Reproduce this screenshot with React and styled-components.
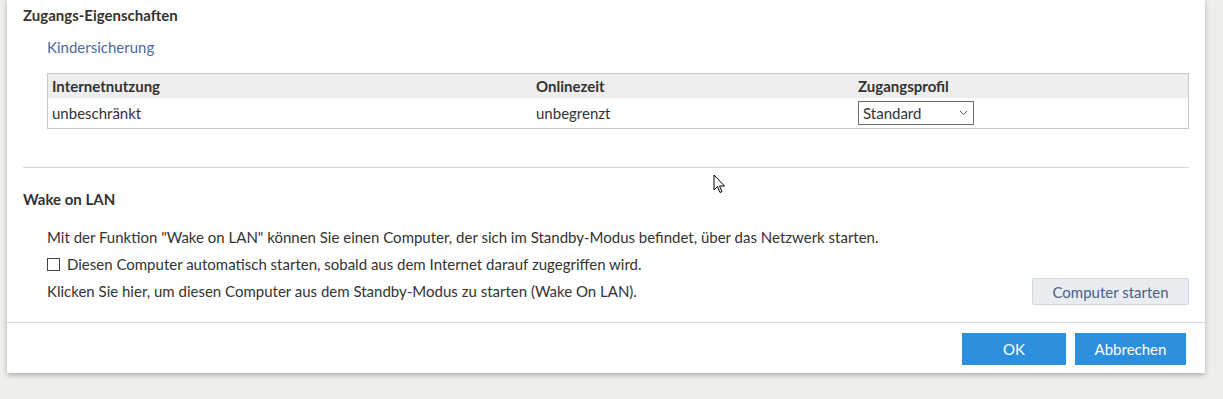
import React from "react";
import styled, { createGlobalStyle } from "styled-components";

const Global = createGlobalStyle`
  html, body { margin: 0; padding: 0; background: #f0eee9; }
  body { font-family: "Source Sans Pro", Lato, "Open Sans", sans-serif; color: #333; }
  * { box-sizing: border-box; }
`;

const Page = styled.div`
  position: relative;
  width: 1223px;
  height: 399px;
  background: #f0eee9;
  padding-left: 7px;
  overflow: hidden;
`;

const Panel = styled.div`
  width: 1198px;
  background: #fff;
  box-shadow: 0 2px 5px rgba(0, 0, 0, 0.28);
`;

const Body = styled.div`
  padding: 5px 16px 0 16px;
`;

const Heading = styled.h2`
  margin: 0;
  font-size: 15px;
  font-weight: 700;
  line-height: 20px;
  color: #333;
`;

const Indented = styled.div`
  padding-left: 24px;
`;

const LinkTitle = styled.div`
  color: #4b6b9b;
  font-size: 15px;
  line-height: 20px;
  margin-top: 12px;
`;

const Table = styled.div`
  margin-top: 16px;
  border: 1px solid #c9c9c9;
  width: 1142px;
`;

const Row = styled.div`
  display: grid;
  grid-template-columns: 484px 322px 1fr;
  align-items: center;
  height: ${(p) => (p.$head ? "24px" : "30px")};
  background: ${(p) => (p.$head ? "#eeeeee" : "#fff")};
  font-weight: ${(p) => (p.$head ? 700 : 400)};
  font-size: 15px;
`;

const Cell = styled.div`
  padding-left: 4px;
`;

const Select = styled.div`
  display: flex;
  align-items: center;
  justify-content: space-between;
  width: 116px;
  height: 24px;
  border: 1px solid #6d6d6d;
  padding: 0 5px 0 4px;
  font-size: 15px;
`;

const Divider = styled.hr`
  margin: 38px 0 0 0;
  border: 0;
  border-top: 1px solid #d6d6d6;
`;

const WakeHeading = styled(Heading)`
  margin-top: 21px;
`;

const Para = styled.div`
  font-size: 15px;
  line-height: 27px;
`;

const First = styled(Para)`
  margin-top: 15px;
`;

const CheckRow = styled.label`
  display: flex;
  align-items: center;
  gap: 7px;
  font-size: 15px;
  line-height: 27px;
`;

const Box = styled.span`
  width: 13px;
  height: 13px;
  border: 1px solid #444;
  background: #fff;
`;

const StartRow = styled.div`
  display: flex;
  align-items: center;
  justify-content: space-between;
  width: 1142px;
`;

const GrayButton = styled.button`
  width: 157px;
  height: 27px;
  border: 1px solid #d3d8de;
  border-radius: 2px;
  background: #e9ecf0;
  color: #4b5f80;
  font-family: inherit;
  font-size: 15px;
`;

const Footer = styled.div`
  margin-top: 17px;
  border-top: 1px solid #d6d6d6;
  display: flex;
  justify-content: flex-end;
  gap: 9px;
  padding: 10px 19px 8px 0;
`;

const BlueButton = styled.button`
  width: ${(p) => p.$w}px;
  height: 32px;
  border: 0;
  background: #2b8fde;
  color: #fff;
  font-family: inherit;
  font-size: 15px;
`;

const Cursor = styled.svg`
  position: absolute;
  left: 713px;
  top: 174px;
`;

export default function App() {
  return (
    <Page>
      <Global />
      <Panel>
        <Body>
          <Heading>Zugangs-Eigenschaften</Heading>
          <Indented>
            <LinkTitle>Kindersicherung</LinkTitle>
            <Table>
              <Row $head>
                <Cell>Internetnutzung</Cell>
                <Cell>Onlinezeit</Cell>
                <Cell>Zugangsprofil</Cell>
              </Row>
              <Row>
                <Cell>unbeschränkt</Cell>
                <Cell>unbegrenzt</Cell>
                <Cell>
                  <Select>
                    <span>Standard</span>
                    <svg width="9" height="6" viewBox="0 0 9 6">
                      <path d="M1 1l3.5 3.5L8 1" fill="none" stroke="#555" strokeWidth="1" />
                    </svg>
                  </Select>
                </Cell>
              </Row>
            </Table>
          </Indented>
          <Divider />
          <WakeHeading>Wake on LAN</WakeHeading>
          <Indented>
            <First>
              Mit der Funktion "Wake on LAN" können Sie einen Computer, der sich im Standby-Modus befindet, über das Netzwerk starten.
            </First>
            <CheckRow>
              <Box />
              Diesen Computer automatisch starten, sobald aus dem Internet darauf zugegriffen wird.
            </CheckRow>
            <StartRow>
              <Para>Klicken Sie hier, um diesen Computer aus dem Standby-Modus zu starten (Wake On LAN).</Para>
              <GrayButton>Computer starten</GrayButton>
            </StartRow>
          </Indented>
        </Body>
        <Footer>
          <BlueButton $w={104}>OK</BlueButton>
          <BlueButton $w={111}>Abbrechen</BlueButton>
        </Footer>
      </Panel>
      <Cursor width="13" height="20" viewBox="0 0 13 20">
        <path d="M1 1v15l3.5-3.5 2.5 6 2-1-2.5-5.5h5z" fill="#fff" stroke="#000" strokeWidth="1" strokeLinejoin="round" />
      </Cursor>
    </Page>
  );
}
